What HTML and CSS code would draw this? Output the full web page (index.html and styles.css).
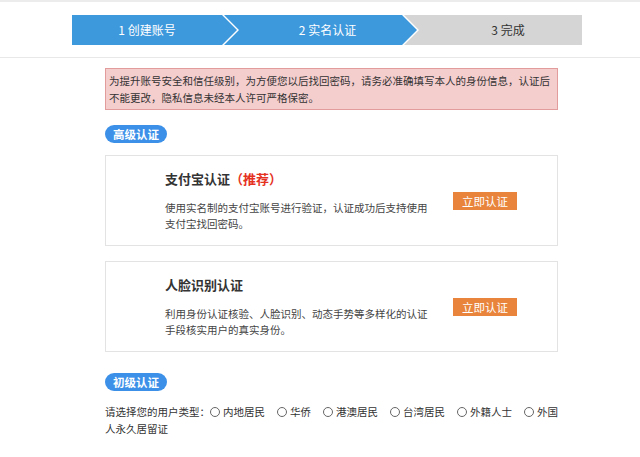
FILE: index.html
```html
<!DOCTYPE html>
<html lang="zh-CN">
<head>
<meta charset="utf-8">
<title>实名认证</title>
<link rel="stylesheet" href="styles.css">
</head>
<body>
<header class="header">
  <div class="steps">
    <div class="step step-first done">1 创建账号</div>
    <div class="step step-mid done">2 实名认证</div>
    <div class="step step-last">3 完成</div>
  </div>
</header>
<main class="main">
  <div class="alert">为提升账号安全和信任级别，为方便您以后找回密码，请务必准确填写本人的身份信息，认证后不能更改，隐私信息未经本人许可严格保密。</div>

  <div class="badge">高级认证</div>

  <div class="card">
    <div class="card-info">
      <div class="card-title">支付宝认证<span class="rec">（推荐）</span></div>
      <div class="card-desc">使用实名制的支付宝账号进行验证，认证成功后支持使用支付宝找回密码。</div>
    </div>
    <button class="btn">立即认证</button>
  </div>

  <div class="card">
    <div class="card-info">
      <div class="card-title">人脸识别认证</div>
      <div class="card-desc">利用身份认证核验、人脸识别、动态手势等多样化的认证手段核实用户的真实身份。</div>
    </div>
    <button class="btn">立即认证</button>
  </div>

  <div class="badge badge-low">初级认证</div>

  <div class="types">请选择您的用户类型：<label class="opt"><input type="radio" name="t">内地居民</label><label class="opt"><input type="radio" name="t">华侨</label><label class="opt"><input type="radio" name="t">港澳居民</label><label class="opt"><input type="radio" name="t">台湾居民</label><label class="opt"><input type="radio" name="t">外籍人士</label><label class="opt last"><input type="radio" name="t">外国人永久居留证</label></div>
</main>
</body>
</html>
```
FILE: styles.css
```css
* { box-sizing: border-box; }
html, body { margin: 0; padding: 0; background: #fff; }
body {
  font-family: "Noto Sans CJK SC", "Noto Sans", sans-serif;
  color: #333;
  font-size: 10.5px;
}
.header {
  border-top: 2px solid #ececec;
  border-bottom: 1px solid #e8e8e8;
  padding: 13px 0 12px 72px;
}
.steps {
  display: flex;
  width: 510px;
  height: 30px;
}
.step {
  height: 30px;
  line-height: 30px;
  font-size: 12px;
  color: #fff;
  background: #3e98dc;
  text-align: center;
}
.step-first {
  width: 165px;
  padding-right: 15px;
  clip-path: polygon(0 0, 150px 0, 165px 50%, 150px 100%, 0 100%);
}
.step-mid {
  width: 193px;
  margin-left: -13px;
  padding-left: 29px;
  padding-right: 15px;
  clip-path: polygon(0 0, 178px 0, 193px 50%, 178px 100%, 0 100%, 15px 50%);
}
.step-last {
  width: 178px;
  margin-left: -13px;
  padding-left: 30px;
  background: #d5d5d5;
  color: #333;
  clip-path: polygon(0 0, 100% 0, 100% 100%, 0 100%, 15px 50%);
}
.main {
  margin-left: 105px;
  width: 453px;
  padding-top: 10px;
}
.alert {
  background: #f4cdcd;
  border: 1px solid #e39c9c;
  padding: 3px 3px;
  line-height: 17px;
  font-size: 10.5px;
  color: #333;
}
.badge {
  display: inline-block;
  margin-top: 15px;
  width: 62px;
  height: 18px;
  line-height: 18px;
  border-radius: 9px;
  background: #3c90e8;
  color: #fff;
  font-size: 11.5px;
  font-weight: bold;
  text-align: center;
}
.badge-low { margin-top: 21px; }
.card {
  display: flex;
  align-items: center;
  margin-top: 12px;
  height: 91px;
  border: 1px solid #e3e3e3;
  padding-left: 59px;
  padding-right: 40px;
}
.card + .card { margin-top: 15px; }
.card-info {
  width: 266px;
  padding-top: 1px;
}
.card-title {
  font-size: 13px;
  font-weight: bold;
  line-height: 18px;
  color: #333;
}
.rec { color: #e5321f; }
.card-desc {
  margin-top: 12px;
  line-height: 16px;
  font-size: 10.5px;
  color: #444;
}
.btn {
  margin-left: auto;
  width: 64px;
  height: 18px;
  padding: 0;
  border: none;
  background: #e8843b;
  color: #fff;
  font-family: inherit;
  font-size: 11.5px;
  line-height: 18px;
}
.types {
  margin-top: 12px;
  line-height: 17px;
  font-size: 10.5px;
  color: #333;
}
.opt {
  margin-right: 12px;
}
.opt.last { margin-right: 0; }
.opt input {
  -webkit-appearance: none;
  appearance: none;
  width: 10px;
  height: 10px;
  margin: 0 3px 0 0;
  border: 1px solid #666;
  border-radius: 50%;
  background: #fff;
  vertical-align: -1px;
}
```
